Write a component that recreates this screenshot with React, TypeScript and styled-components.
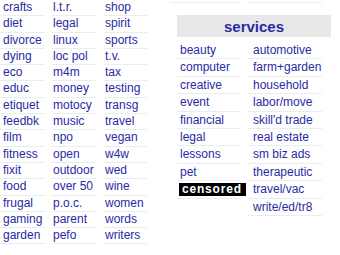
import React from 'react'
import styled, { createGlobalStyle } from 'styled-components'

const GlobalStyle = createGlobalStyle`
  html, body {
    margin: 0;
    padding: 0;
    background: #fff;
  }
  body {
    font-family: 'Liberation Sans', Arial, sans-serif;
    font-size: 12px;
    overflow: hidden;
  }
  * {
    box-sizing: border-box;
  }
`

const LINK = '#2a2aa4'
const RULE = '#ececec'

const Page = styled.div`
  display: flex;
  align-items: flex-start;
  width: 340px;
  height: 255px;
`

const LeftBlock = styled.div`
  display: grid;
  grid-template-columns: 45px 45px 43px;
  column-gap: 7px;
  width: 170px;
`

const Column = styled.ul`
  list-style: none;
  margin: 0;
  padding: 0;
`

const Item = styled.li<{ $h: number; $pad: number }>`
  height: ${({ $h }) => $h}px;
  line-height: ${({ $h }) => $h - 1}px;
  border-bottom: 1px solid ${RULE};
  padding-left: ${({ $pad }) => $pad}px;
  white-space: nowrap;
  color: ${LINK};
`

const Link = styled.a`
  color: ${LINK};
  text-decoration: none;
`

const Censored = styled.span`
  display: inline-block;
  vertical-align: middle;
  background: #000;
  color: #fff;
  font-weight: 700;
  font-size: 12px;
  letter-spacing: 0.8px;
  line-height: 13px;
  padding: 0 4px 0 3px;
  margin-left: -1px;
`

const RightBlock = styled.div`
  display: flex;
  flex-direction: column;
  width: 162px;
`

const PrevRow = styled.div`
  display: grid;
  grid-template-columns: 70px 74px;
  column-gap: 8px;
  height: 3px;
  div {
    border-bottom: 1px solid ${RULE};
  }
`

const Header = styled.h4`
  margin: 12px 0 0 7px;
  width: 154px;
  height: 22px;
  line-height: 23px;
  background: #e8e8e8;
  text-align: center;
  font-size: 15px;
  font-weight: 700;
  color: ${LINK};
`

const ServiceGrid = styled.div`
  display: grid;
  grid-template-columns: 63px 74px;
  column-gap: 8px;
  margin: 5px 0 0 7px;
`

const left: string[][] = [
  ['crafts', 'diet', 'divorce', 'dying', 'eco', 'educ', 'etiquet', 'feedbk', 'film', 'fitness', 'fixit', 'food', 'frugal', 'gaming', 'garden'],
  ['l.t.r.', 'legal', 'linux', 'loc pol', 'm4m', 'money', 'motocy', 'music', 'npo', 'open', 'outdoor', 'over 50', 'p.o.c.', 'parent', 'pefo'],
  ['shop', 'spirit', 'sports', 't.v.', 'tax', 'testing', 'transg', 'travel', 'vegan', 'w4w', 'wed', 'wine', 'women', 'words', 'writers'],
]

const services: string[][] = [
  ['beauty', 'computer', 'creative', 'event', 'financial', 'legal', 'lessons', 'pet', '#censored'],
  ['automotive', 'farm+garden', 'household', 'labor/move', "skill'd trade", 'real estate', 'sm biz ads', 'therapeutic', 'travel/vac', 'write/ed/tr8'],
]

export default function App() {
  return (
    <>
      <GlobalStyle />
      <Page>
        <LeftBlock>
          {left.map((col, i) => (
            <Column key={i}>
              {col.map((t) => (
                <Item key={t} $h={16.3} $pad={i === 0 ? 3 : 1}>
                  <Link href="#">{t}</Link>
                </Item>
              ))}
            </Column>
          ))}
        </LeftBlock>
        <RightBlock>
          <PrevRow>
            <div />
            <div />
          </PrevRow>
          <Header>services</Header>
          <ServiceGrid>
            {services.map((col, i) => (
              <Column key={i}>
                {col.map((t) => (
                  <Item key={t} $h={17.4} $pad={i === 0 ? 3 : 5}>
                    {t === '#censored' ? <Censored>censored</Censored> : <Link href="#">{t}</Link>}
                  </Item>
                ))}
              </Column>
            ))}
          </ServiceGrid>
        </RightBlock>
      </Page>
    </>
  )
}
